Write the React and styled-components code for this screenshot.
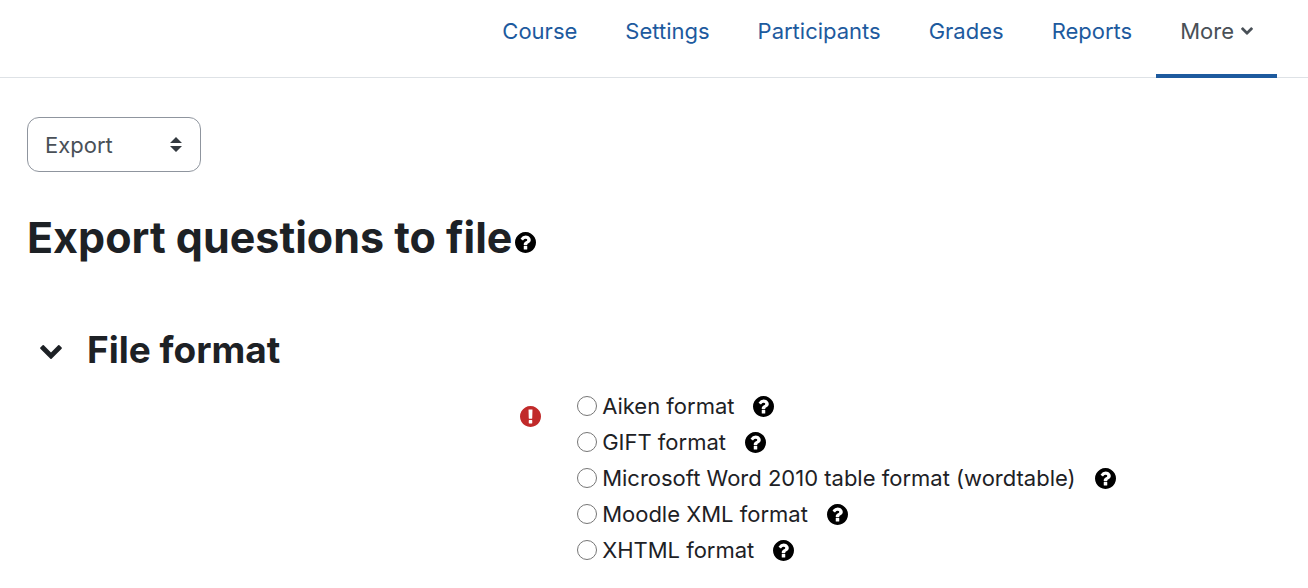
import { useState } from "react";
import styled, { createGlobalStyle } from "styled-components";

const GlobalStyle = createGlobalStyle`
  * {
    box-sizing: border-box;
  }
  body {
    margin: 0;
    background: #fff;
    color: #1d2125;
    font-family: Inter, "Liberation Sans", sans-serif;
    font-size: 22px;
    line-height: 36px;
  }
`;

const Nav = styled.nav`
  display: flex;
  justify-content: flex-end;
  height: 78px;
  padding: 0 31px;
  border-bottom: 1px solid #dee2e6;
`;

const NavLink = styled.a`
  display: flex;
  align-items: center;
  gap: 7px;
  height: 78px;
  padding: 0 24px 12px;
  border-bottom: 4px solid ${(props) => (props.$active ? "#1d5a9e" : "transparent")};
  color: ${(props) => (props.$active ? "#495057" : "#1d5a9e")};
  text-decoration: none;
`;

const Main = styled.main`
  padding: 39px 27px 20px;
`;

const SelectWrap = styled.div`
  display: inline-grid;
  align-items: center;
  width: 174px;

  select,
  svg {
    grid-area: 1 / 1;
  }
  svg {
    justify-self: end;
    margin-right: 19px;
    pointer-events: none;
  }
`;

const Select = styled.select`
  appearance: none;
  height: 55px;
  padding: 0 17px;
  border: 1px solid #8f959e;
  border-radius: 12px;
  background: #fff;
  color: #495057;
  font: inherit;
`;

const Title = styled.h2`
  display: flex;
  align-items: baseline;
  gap: 3px;
  margin: 37px 0 0;
  font-size: 43px;
  font-weight: 700;
  line-height: 56px;
`;

const SectionHeader = styled.div`
  display: flex;
  align-items: center;
  gap: 25px;
  margin-top: 61px;
  padding-left: 13px;
`;

const SectionTitle = styled.h3`
  margin: 0;
  font-size: 37px;
  font-weight: 700;
  line-height: 48px;
`;

const IconButton = styled.button`
  display: flex;
  padding: 0;
  border: 0;
  background: none;
  color: #000;
  cursor: pointer;
`;

const FoldButton = styled(IconButton)`
  padding-top: 4px;
  color: #1d2125;
`;

const FormRow = styled.div`
  display: grid;
  grid-template-columns: 41% 1fr;
  column-gap: 36px;
  margin-top: 14px;
`;

const RequiredMark = styled.div`
  display: flex;
  justify-content: flex-end;
  padding-top: 18px;
  color: #c12a2a;
`;

const Options = styled.fieldset`
  min-width: 0;
  margin: 0;
  padding: 0;
  border: 0;
`;

const Option = styled.div`
  display: flex;
  align-items: center;
  gap: 19px;

  label {
    display: flex;
    align-items: center;
    gap: 5px;
  }
`;

const Radio = styled.input`
  appearance: none;
  width: 20px;
  height: 20px;
  margin: 0;
  border: 1px solid #767676;
  border-radius: 50%;
  background: #fff;

  &:checked {
    border: 6px solid #1d5a9e;
  }
`;

const HelpIcon = () => (
  <svg width="21" height="21" viewBox="128 128 1536 1536" fill="currentColor" aria-hidden="true">
    <path d="M1024 1376v-192q0-14-9-23t-23-9h-192q-14 0-23 9t-9 23v192q0 14 9 23t23 9h192q14 0 23-9t9-23zM1280 704q0-88-55.5-163t-138.5-116-170-41q-243 0-371 213-15 24 8 42l132 100q7 6 19 6 16 0 25-12 53-68 86-92 34-24 86-24 48 0 85.500 26t37.500 59q0 38-20 61t-68 45q-63 28-115.500 86.500t-52.500 125.500v36q0 14 9 23t23 9h192q14 0 23-9t9-23q0-19 21.500-49.500t54.500-49.500q32-18 49-28.500t46-35 44.500-48 28-60.500 12.500-81zM1664 896q0 209-103 385.500t-279.500 279.500-385.500 103-385.500-103-279.500-279.500-103-385.500 103-385.500 279.500-279.500 385.500-103 385.500 103 279.500 279.500 103 385.500z" />
  </svg>
);

const RequiredIcon = () => (
  <svg width="21" height="21" viewBox="128 128 1536 1536" fill="currentColor" role="img" aria-label="Required">
    <path d="M896 128q209 0 385.500 103t279.500 279.500 103 385.500-103 385.500-279.500 279.500-385.500 103-385.500-103-279.500-279.500-103-385.500 103-385.500 279.500-279.500 385.500-103zM1024 1375v-190q0-14-9-23.500t-22-9.500h-192q-13 0-23 10t-10 23v190q0 13 10 23t23 10h192q13 0 22-9.500t9-23.500zM1022 1031l18-621q0-12-10-18-10-8-24-8h-220q-14 0-24 8-10 6-10 18l17 621q0 10 10 17.500t24 7.500h185q14 0 23.500-7.500t10.500-17.500z" />
  </svg>
);

const Chevron = ({ width, height }) => (
  <svg width={width} height={height} viewBox="90 533 1612 1035" fill="currentColor" aria-hidden="true">
    <path d="M1683 808l-742 741q-19 19-45 19t-45-19l-742-741q-19-19-19-45.500t19-45.500l166-165q19-19 45-19t45 19l531 531 531-531q19-19 45-19t45 19l166 165q19 19 19 45.500t-19 45.500z" />
  </svg>
);

const links = ["Course", "Settings", "Participants", "Grades", "Reports"];

const formats = [
  { id: "aiken", label: "Aiken format" },
  { id: "gift", label: "GIFT format" },
  { id: "wordtable", label: "Microsoft Word 2010 table format (wordtable)" },
  { id: "xml", label: "Moodle XML format" },
  { id: "xhtml", label: "XHTML format" },
];

const App = () => {
  const [format, setFormat] = useState("");
  const [open, setOpen] = useState(true);

  return (
    <>
      <GlobalStyle />
      <Nav>
        {links.map((link) => (
          <NavLink href="#" key={link}>
            {link}
          </NavLink>
        ))}
        <NavLink href="#" $active>
          More
          <Chevron width="12" height="8" />
        </NavLink>
      </Nav>
      <Main>
        <SelectWrap>
          <Select aria-label="Question bank navigation">
            <option>Export</option>
          </Select>
          <svg width="12" height="15" viewBox="0 0 12 15" fill="#343a40" aria-hidden="true">
            <path d="M6 0l6 6H0zM0 9h12l-6 6z" />
          </svg>
        </SelectWrap>
        <Title>
          Export questions to file
          <IconButton type="button" aria-label="Help with exporting questions">
            <HelpIcon />
          </IconButton>
        </Title>
        <SectionHeader>
          <FoldButton
            type="button"
            aria-label="File format"
            aria-expanded={open}
            onClick={() => setOpen(!open)}
          >
            <Chevron width="22" height="14" />
          </FoldButton>
          <SectionTitle>File format</SectionTitle>
        </SectionHeader>
        {open && (
          <FormRow>
            <RequiredMark>
              <RequiredIcon />
            </RequiredMark>
            <Options aria-label="File format">
              {formats.map((item) => (
                <Option key={item.id}>
                  <label htmlFor={item.id}>
                    <Radio
                      type="radio"
                      name="format"
                      id={item.id}
                      checked={format === item.id}
                      onChange={() => setFormat(item.id)}
                    />
                    {item.label}
                  </label>
                  <IconButton type="button" aria-label={`Help with ${item.label}`}>
                    <HelpIcon />
                  </IconButton>
                </Option>
              ))}
            </Options>
          </FormRow>
        )}
      </Main>
    </>
  );
};

export default App;
